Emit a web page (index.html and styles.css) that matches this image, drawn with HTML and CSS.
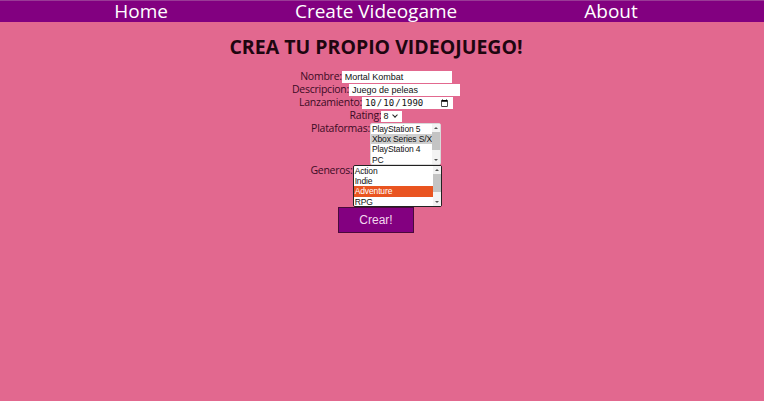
FILE: index.html
```html
<!DOCTYPE html>
<html lang="es">
<head>
<meta charset="utf-8">
<title>Create Videogame</title>
<link rel="stylesheet" href="styles.css">
</head>
<body>
<nav class="nav">
  <a class="nav-link" href="#">Home</a>
  <a class="nav-link" href="#">Create Videogame</a>
  <a class="nav-link" href="#">About</a>
</nav>
<main class="page">
  <h1 class="title">CREA TU PROPIO VIDEOJUEGO!</h1>
  <form class="form">
    <div class="row"><label class="label">Nombre:</label><input class="field field-name" type="text" value="Mortal Kombat"></div>
    <div class="row"><label class="label">Descripcion:</label><input class="field field-desc" type="text" value="Juego de peleas"></div>
    <div class="row"><label class="label">Lanzamiento:</label><input class="field field-date" type="date" value="1990-10-10"></div>
    <div class="row"><label class="label">Rating:</label><span class="rating-wrap"><select class="rating"><option>8</option></select></span></div>
    <div class="row row-list"><label class="label">Plataformas:</label>
      <span class="list-wrap">
        <select class="list list-plat" multiple size="4">
          <option>PlayStation 5</option>
          <option class="opt-inactive">Xbox Series S/X</option>
          <option>PlayStation 4</option>
          <option>PC</option>
          <option>Nintendo Switch</option>
        </select>
        <span class="sb"><span class="sb-up"></span><span class="sb-thumb"></span><span class="sb-track"></span><span class="sb-down"></span></span>
      </span>
    </div>
    <div class="row row-list"><label class="label">Generos:</label>
      <span class="list-wrap">
        <select class="list list-gen" multiple size="4">
          <option>Action</option>
          <option>Indie</option>
          <option class="opt-active">Adventure</option>
          <option>RPG</option>
          <option>Strategy</option>
          <option>Shooter</option>
        </select>
        <span class="sb"><span class="sb-up"></span><span class="sb-thumb"></span><span class="sb-track"></span><span class="sb-down"></span></span>
      </span>
    </div>
    <div class="row row-btn"><button class="btn" type="button">Crear!</button></div>
  </form>
</main>
</body>
</html>
```
FILE: styles.css
```css
html, body {
  margin: 0;
  padding: 0;
}
body {
  background: #e2688f;
  font-family: "Open Sans", "Noto Sans", sans-serif;
  color: #3c0b25;
  height: 401px;
  overflow: hidden;
}
.nav {
  background: #820080;
  box-shadow: inset 0 1px 0 #9a3a96;
  height: 22px;
  display: flex;
  align-items: center;
  justify-content: center;
  gap: 127px;
  padding-right: 12px;
}
.nav-link {
  color: #ffffff;
  text-decoration: none;
  font-size: 19px;
  line-height: 22px;
}
.page {
  padding-right: 12px;
  text-align: center;
}
.title {
  margin: 13px 0 11px;
  font-size: 19.5px;
  line-height: 24px;
  font-weight: 700;
  color: #1e0610;
}
.form {
  display: flex;
  flex-direction: column;
  align-items: center;
}
.row {
  display: flex;
  align-items: baseline;
  justify-content: center;
  height: 13px;
}
.row-list {
  height: 42px;
}
.label {
  font-size: 10.5px;
  line-height: 13px;
  letter-spacing: -0.25px;
}
.field {
  border: 0;
  padding: 0 3px;
  height: 12px;
  font-family: "Liberation Sans", Arial, sans-serif;
  font-size: 9px;
  color: #111;
  background: #fff;
  box-sizing: border-box;
  outline: none;
}
.field-name { width: 110px; }
.field-desc { width: 111px; }
.field-date {
  width: 91px;
  font-family: "DejaVu Sans Mono", monospace;
  font-size: 9px;
  padding: 0 2px;
}
.rating-wrap {
  position: relative;
  display: inline-block;
  width: 21px;
  height: 11px;
  background: #fff;
}
.rating-wrap::after {
  content: "";
  position: absolute;
  right: 5px;
  top: 2px;
  width: 3px;
  height: 3px;
  border-right: 1.5px solid #222;
  border-bottom: 1.5px solid #222;
  transform: rotate(45deg);
  pointer-events: none;
}
.rating {
  appearance: none;
  -webkit-appearance: none;
  width: 21px;
  height: 11px;
  border: 0;
  padding: 0 0 0 2px;
  font-size: 9px;
  line-height: 11px;
  font-family: "Liberation Sans", Arial, sans-serif;
  background: transparent;
  color: #111;
  display: block;
}
.list-wrap {
  position: relative;
  display: inline-block;
}
.list {
  font-family: "Liberation Sans", Arial, sans-serif;
  font-size: 8.5px;
  background: #fff;
  color: #111;
  box-sizing: border-box;
  padding: 0;
  height: 42px;
  outline: none;
  display: block;
}
.list option {
  padding: 0 1px;
  letter-spacing: -0.12px;
}
.list-plat {
  width: 71px;
  border: 1px solid #d9d9d9;
}
.list-gen {
  width: 89px;
  border: 1px solid #222;
  border-radius: 2px;
}
.opt-inactive {
  background: #cfcfcf;
}
.opt-active {
  background: #e95420;
  color: #fff;
}
.sb {
  position: absolute;
  top: 1px;
  bottom: 1px;
  right: 1px;
  width: 8px;
  background: #f3f3f3;
  display: flex;
  flex-direction: column;
}
.sb-up, .sb-down {
  height: 8px;
  display: flex;
  align-items: center;
  justify-content: center;
}
.sb-up::before {
  content: "";
  border-left: 2px solid transparent;
  border-right: 2px solid transparent;
  border-bottom: 2px solid #555;
}
.sb-down::before {
  content: "";
  border-left: 2px solid transparent;
  border-right: 2px solid transparent;
  border-top: 2px solid #555;
}
.sb-thumb {
  height: 18px;
  background: #c4c4c4;
}
.sb-track {
  flex: 1;
}
.row-btn {
  height: auto;
  margin-top: 1px;
}
.btn {
  width: 76px;
  height: 26px;
  background: #830080;
  color: #f3d7ef;
  border: 1px solid #4a0a3a;
  font-family: "Liberation Sans", Arial, sans-serif;
  font-size: 12px;
  padding: 0;
}
```
